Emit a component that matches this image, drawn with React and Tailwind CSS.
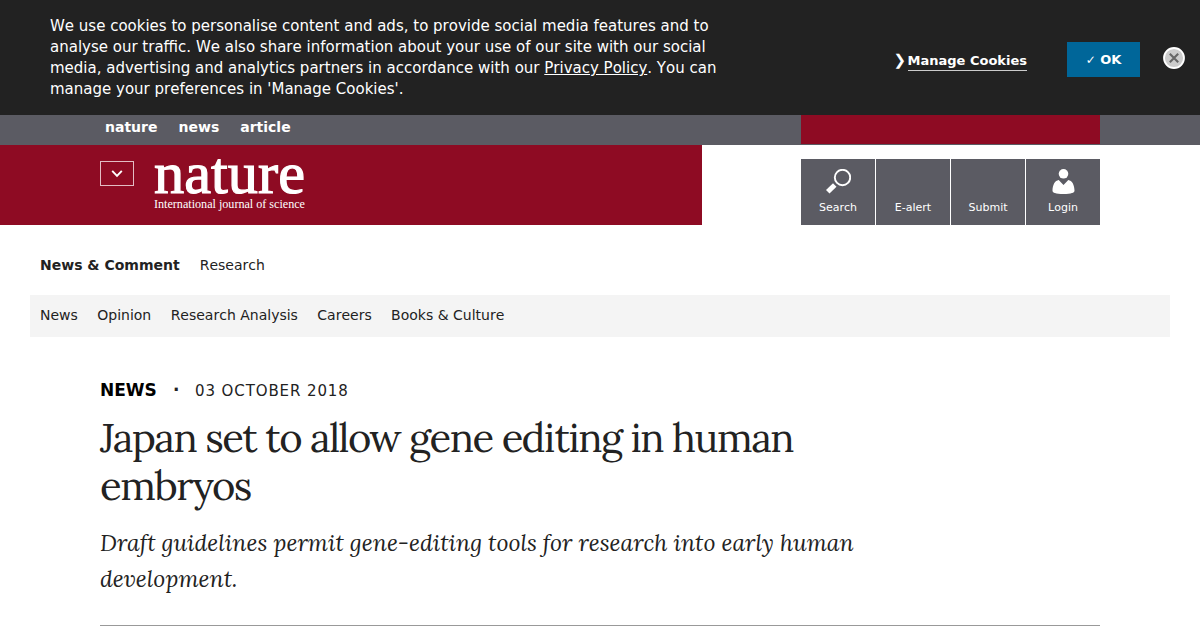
const breadcrumbs = ['nature', 'news', 'article'];
const sections = ['News', 'Opinion', 'Research Analysis', 'Careers', 'Books & Culture'];

function SearchIcon() {
  return (
    <svg width="26" height="26" viewBox="0 0 26 26" fill="none">
      <circle cx="17.5" cy="8.5" r="7.7" stroke="white" strokeWidth="1.9" />
      <path d="M1 21 L8 14.2 L11.5 17.7 L4.5 24.6 Z" fill="white" />
    </svg>
  );
}

function LoginIcon() {
  return (
    <svg width="24" height="26" viewBox="0 0 24 26" fill="white">
      <circle cx="12.5" cy="4.8" r="4.8" />
      <path d="M7.7 11 L12.5 16 L17.3 11 C21 11.6 23.5 15.8 23.5 21.8 C23.5 23.8 20.5 25 12.5 25 C4.5 25 1.5 23.8 1.5 21.8 C1.5 15.8 4 11.6 7.7 11 Z" />
    </svg>
  );
}

const tools = [
  { label: 'Search', icon: <SearchIcon /> },
  { label: 'E-alert', icon: null },
  { label: 'Submit', icon: null },
  { label: 'Login', icon: <LoginIcon /> },
];

function CookieBanner() {
  return (
    <div className="flex h-[115px] bg-[#222222] pl-[50px] pr-[15px] text-white">
      <p className="w-[680px] pt-4 text-[15px] leading-[21px]">
        We use cookies to personalise content and ads, to provide social media features and to
        <br />
        analyse our traffic. We also share information about your use of our site with our social
        <br />
        media, advertising and analytics partners in accordance with our{' '}
        <a href="#" className="underline">Privacy Policy</a>. You can
        <br />
        manage your preferences in 'Manage Cookies'.
      </p>
      <div className="ml-auto flex items-start">
        <div className="mt-[51px] flex text-[13px] font-bold leading-[19px]">
          <span className="w-[14px] text-[15px]">❯</span>
          <a href="#" className="h-5 border-b border-[#cccccc]">Manage Cookies</a>
        </div>
        <button className="ml-10 mt-[42px] h-[35px] w-[73px] bg-[#006699] text-[13px] font-bold">
          <span className="text-[12px] font-normal">✓</span> OK
        </button>
        <button className="ml-[23px] mt-[47px]" aria-label="Close">
          <svg width="22" height="22" viewBox="0 0 22 22">
            <circle cx="11" cy="11" r="10" fill="#cccccc" stroke="white" strokeWidth="1.8" />
            <path d="M6.8 6.8 L15.2 15.2 M15.2 6.8 L6.8 15.2" stroke="#666666" strokeWidth="2.1" />
          </svg>
        </button>
      </div>
    </div>
  );
}

function Header() {
  return (
    <header>
      <div className="flex h-[30px] bg-[#5b5b63] pl-[105px] pr-[100px]">
        <nav className="flex gap-[21px] pt-0.5 text-[14px] font-bold leading-5 text-white">
          {breadcrumbs.map((item) => (
            <a key={item} href="#">{item}</a>
          ))}
        </nav>
        <div className="ml-auto h-[29px] w-[299px] bg-[#8e0b23]"></div>
      </div>

      <div className="flex h-20 justify-between pr-[100px]">
        <div className="flex w-[702px] bg-[#8e0b23] pl-[100px]">
          <button className="mt-4 flex h-[25px] w-[34px] items-center justify-center border border-[#e3bcc3]">
            <svg width="12" height="8" viewBox="0 0 12 8" fill="none">
              <path d="M1.2 0.8 L6 5.8 L10.8 0.8" stroke="white" strokeWidth="1.9" />
            </svg>
          </button>
          <svg className="ml-5 mt-2.5 overflow-visible" width="154" height="58" fill="white" fontFamily="Liberation Serif, serif">
            <text x="0" y="37.5" fontSize="60" textLength="151" lengthAdjust="spacingAndGlyphs" stroke="white" strokeWidth="1.2">nature</text>
            <text x="0" y="53" fontSize="12" textLength="151" lengthAdjust="spacingAndGlyphs">International journal of science</text>
          </svg>
        </div>

        <div className="mt-3.5 grid h-[66px] w-[299px] grid-cols-4 gap-px text-[11px] text-white">
          {tools.map(({ label, icon }) => (
            <a key={label} href="#" className="flex flex-col items-center bg-[#5b5b63] pt-2.5">
              <span className="h-8">{icon}</span>
              <span className="leading-[14px]">{label}</span>
            </a>
          ))}
        </div>
      </div>
    </header>
  );
}

export default function App() {
  return (
    <div className="h-[630px] overflow-hidden bg-white font-['DejaVu_Sans',sans-serif] text-[#222222] [font-kerning:none]">
      <CookieBanner />
      <Header />

      <nav className="flex gap-5 px-10 pt-[30px] text-[14px] leading-5">
        <a href="#" className="font-bold">News &amp; Comment</a>
        <a href="#">Research</a>
      </nav>
      <nav className="mx-[30px] mt-5 flex h-[42px] gap-[19.4px] bg-[#f4f4f4] px-2.5 pt-2.5 text-[14px] leading-5">
        {sections.map((section) => (
          <a key={section} href="#">{section}</a>
        ))}
      </nav>

      <article className="mx-[100px] mt-10 h-[249px] border-b border-[#999999]">
        <div className="flex pt-px leading-6">
          <span className="w-[73px] text-[17px] font-bold text-black">NEWS</span>
          <span className="w-[22px] text-[17px] font-bold">·</span>
          <time className="pt-px text-[15px] tracking-[0.9px]">03 OCTOBER 2018</time>
        </div>
        <h1 className="mt-[11px] font-[Lora,'Liberation_Serif',serif] text-[40px] leading-[48px] tracking-[-1.5px] [font-kerning:auto]">
          Japan set to allow gene editing in human
          <br />
          embryos
        </h1>
        <p className="mt-[15px] font-[Lora,'Liberation_Serif',serif] text-[23px] italic leading-9 [font-kerning:auto]">
          Draft guidelines permit gene-editing tools for research into early human
          <br />
          development.
        </p>
      </article>
    </div>
  );
}
